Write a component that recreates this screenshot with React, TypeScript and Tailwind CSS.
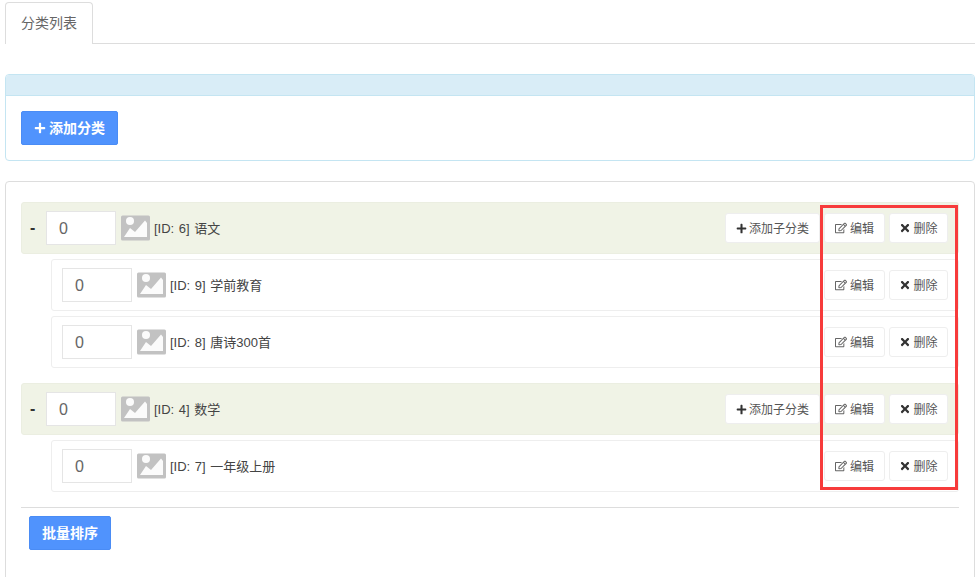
import { FaPlus, FaTimes, FaRegEdit } from "react-icons/fa";

const font = "font-['Liberation_Sans','Noto_Sans_CJK_SC',sans-serif]";

function Thumb() {
  return (
    <svg width="29" height="26" viewBox="0 0 29 26" className="shrink-0">
      <rect x="0" y="0.5" width="29" height="25" rx="1.5" fill="#c2c2c2" />
      <circle cx="9" cy="6" r="4" fill="#fbfbfb" />
      <path d="M3 22 L9 13 L14 17 L24 5.5 L26 8 L26 22 Z" fill="#fbfbfb" />
    </svg>
  );
}

function ActionButton({ kind }: { kind: "add" | "edit" | "del" }) {
  if (kind === "add") {
    return (
      <button className="h-[30px] w-[95px] rounded-[3px] border border-[#eeeeee] bg-white text-[12px] text-[#555] flex items-center justify-center gap-[2px]">
        <FaPlus className="text-[11px] text-[#333]" />
        <span className="pt-[2px]">添加子分类</span>
      </button>
    );
  }
  if (kind === "edit") {
    return (
      <button className="h-[30px] w-[61px] rounded-[3px] border border-[#eeeeee] bg-white text-[12px] text-[#555] flex items-center justify-center gap-[3px]">
        <FaRegEdit className="text-[12px] text-[#666]" />
        <span className="pt-[2px]">编辑</span>
      </button>
    );
  }
  return (
    <button className="h-[30px] w-[59px] rounded-[3px] border border-[#eeeeee] bg-white text-[12px] text-[#555] flex items-center justify-center gap-[2px]">
      <FaTimes className="text-[12px] text-[#333]" />
      <span className="pt-[2px]">删除</span>
    </button>
  );
}

function Row({ label, parent }: { label: string; parent?: boolean }) {
  return (
    <div
      className={
        parent
          ? "h-[52px] flex items-center rounded-[3px] bg-[#f0f3e6] border border-[#ebeee1] pr-[10px]"
          : "ml-[30px] mt-[5px] h-[52px] flex items-center rounded-[3px] bg-white border border-[#eeeeee] pl-[10px] pr-[10px]"
      }
    >
      {parent && <span className="w-[24px] pl-[8px] text-[16px] font-bold text-[#333]">-</span>}
      <div className="w-[70px] h-[34px] border border-[#e5e5e5] bg-white flex items-center pl-[12px] pt-[2px] text-[16px] text-[#666]">0</div>
      <div className="ml-[5px]"><Thumb /></div>
      <span className="ml-[4px] pt-[2px] text-[13px] text-[#444] [word-spacing:1px]">{label}</span>
      <div className="ml-auto flex items-center gap-[4px]">
        {parent && <ActionButton kind="add" />}
        <ActionButton kind="edit" />
        <ActionButton kind="del" />
      </div>
    </div>
  );
}

export default function App() {
  return (
    <div className={`relative h-[577px] w-[977px] overflow-hidden bg-white ${font}`}>
      <div className="ml-[5px] mr-[2px] h-[44px] flex items-end border-b border-[#dddddd]">
        <div className="h-[42px] w-[88px] -mb-px rounded-t-[4px] border border-b-0 border-[#dddddd] bg-white flex items-center justify-center text-[14px] text-[#666]">
          分类列表
        </div>
      </div>

      <div className="ml-[5px] mr-[2px] mt-[30px] h-[87px] rounded-[4px] border border-[#c4e5f2] overflow-hidden">
        <div className="h-[21px] bg-[#d9edf7] border-b border-[#c4e5f2]" />
        <div className="pl-[15px] pt-[15px]">
          <button className="h-[34px] w-[97px] rounded-[2px] bg-[#5093fd] border border-[#4a8cf5] text-white text-[14px] font-bold flex items-center justify-center gap-[3px]">
            <FaPlus className="text-[12px]" />
            <span>添加分类</span>
          </button>
        </div>
      </div>

      <div className="ml-[5px] mr-[2px] mt-[20px] h-[420px] rounded-[4px] border border-[#dddddd] px-[15px] pt-[20px]">
        <div>
          <Row parent label="[ID: 6] 语文" />
          <Row label="[ID: 9] 学前教育" />
          <Row label="[ID: 8] 唐诗300首" />
        </div>
        <div className="mt-[15px]">
          <Row parent label="[ID: 4] 数学" />
          <Row label="[ID: 7] 一年级上册" />
        </div>
        <div className="mt-[15px] border-t border-[#dddddd] pt-[8px] pl-[8px]">
          <button className="h-[34px] w-[82px] rounded-[2px] bg-[#5093fd] border border-[#4a8cf5] text-white text-[14px] font-bold">
            批量排序
          </button>
        </div>
      </div>

      <div className="absolute left-[820px] top-[205px] w-[138px] h-[285px] border-[3px] border-[#f73b3b] pointer-events-none" />
    </div>
  );
}
